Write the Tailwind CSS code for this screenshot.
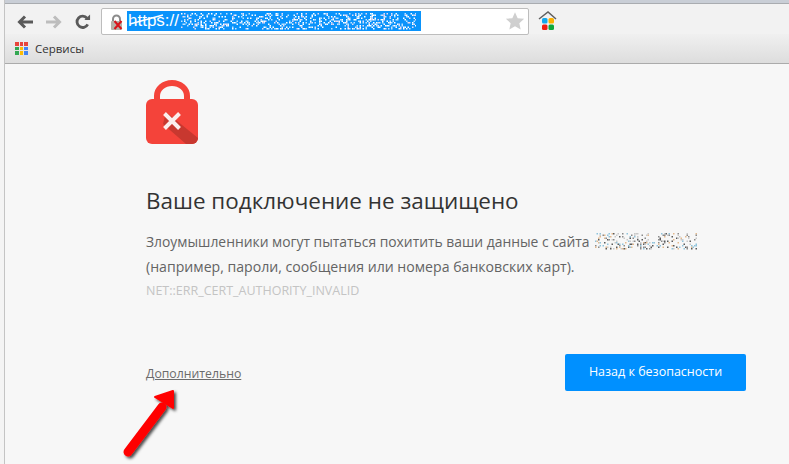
<!DOCTYPE html>
<html lang="ru">
<head>
  <meta charset="UTF-8" />
  <title>Ошибка конфиденциальности</title>
  <script src="https://cdn.jsdelivr.net/npm/@tailwindcss/browser@4"></script>
</head>
<body class="bg-[#f7f7f7] font-['Open_Sans','Noto_Sans',sans-serif] overflow-hidden">
  <div class="relative w-[789px] h-[464px] overflow-hidden flex">
    <!-- Window edge -->
    <div class="w-[5px] h-full bg-[#f4f4f4] border-r border-[#c4c4c4] shrink-0"></div>

    <div class="flex-1 flex flex-col min-w-0">
      <!-- Tab strip -->
      <div class="h-[4px] bg-[#c9ced6] border-b border-[#a9acb0] shrink-0"></div>

      <!-- Toolbar -->
      <div class="h-[30px] bg-[#f2f2f2] flex items-start pt-1 shrink-0">
        <div class="flex items-center w-[96px] h-[26px] pl-[12px] gap-[13px] pt-[1px] shrink-0">
          <svg width="16" height="14" viewBox="0 0 16 14"><path d="M16 7H4M8 1.500 2.500 7 8 12.500" fill="none" stroke="#5a5a5a" stroke-width="3"/></svg>
          <svg width="16" height="14" viewBox="0 0 16 14"><path d="M0 7h12M8 1.500 13.500 7 8 12.500" fill="none" stroke="#bdbdbd" stroke-width="3"/></svg>
          <svg width="16" height="16" viewBox="0 0 17 16"><path d="M13.500 10.500A6 6 0 1 1 12.800 4" fill="none" stroke="#5a5a5a" stroke-width="3"/><path d="M10 6h6V0z" fill="#5a5a5a"/></svg>
        </div>

        <!-- Omnibox -->
        <div class="relative w-[428px] h-[27px] bg-white border border-[#bdbdbd] rounded-[2px] flex items-center shrink-0">
          <svg width="17" height="17" viewBox="0 0 17 17" class="absolute left-[7px] top-[5px]">
            <path d="M4 8V5a3.500 3.500 0 0 1 7 0v3" fill="none" stroke="#8c8c8c" stroke-width="2"/>
            <rect x="2" y="7" width="11" height="9" rx="1" fill="#b5b1a8"/>
            <path d="M5.500 7l7 8M12.500 7l-7 8" stroke="#d8141a" stroke-width="2"/>
          </svg>
          <div class="absolute left-[25px] top-[2px] w-[294px] h-[20px] bg-[#0a93fb] overflow-hidden flex items-center">
            <span class="text-[17px] leading-[20px] text-white font-['Liberation_Sans',sans-serif] pl-[1px]">https://</span>
            <svg id="urlNoise" width="235" height="20" class="ml-[2px]"></svg>
            <svg width="40" height="20" class="absolute left-0 top-0"><path d="M3 13 36 4" stroke="#ffffff" stroke-width="1.500"/></svg>
          </div>
          <svg width="20" height="20" viewBox="0 0 24 24" class="absolute right-[3px] top-[2px]"><path d="M12 1.500l3.200 7.100 7.800.800-5.800 5.200 1.600 7.700L12 18.400l-6.800 3.900 1.600-7.700L1 9.400l7.800-.800z" fill="#cfcfcf"/></svg>
        </div>

        <!-- Home extension icon -->
        <svg width="20" height="21" viewBox="0 0 20 21" class="ml-[9px] mt-[2px] shrink-0">
          <path d="M1 9 10 2l8 7" fill="none" stroke="#606060" stroke-width="1.500"/>
          <rect x="4" y="8" width="5.500" height="5.500" rx="1.500" fill="#13a8ec"/>
          <rect x="10.500" y="8" width="5.500" height="5.500" rx="1.500" fill="#fbb000"/>
          <rect x="4" y="14.500" width="5.500" height="5.500" rx="1.500" fill="#f21d12"/>
          <rect x="10.500" y="14.500" width="5.500" height="5.500" rx="1.500" fill="#0fa83a"/>
        </svg>
      </div>

      <!-- Bookmarks bar -->
      <div class="h-[30px] bg-linear-to-b from-[#f0f0f0] to-[#dddddd] border-b border-[#ababab] flex items-center pl-[10px] gap-[7px] shrink-0">
        <div class="grid grid-cols-3 gap-[1px] w-[13px] h-[13px]">
          <span class="bg-[#e8453c]"></span><span class="bg-[#e8453c]"></span><span class="bg-[#e8453c]"></span>
          <span class="bg-[#34a853]"></span><span class="bg-[#fbbc05]"></span><span class="bg-[#4285f4]"></span>
          <span class="bg-[#34a853]"></span><span class="bg-[#fbbc05]"></span><span class="bg-[#4285f4]"></span>
        </div>
        <span class="text-[11.500px] text-[#333] leading-none">Сервисы</span>
      </div>

      <!-- Interstitial -->
      <main class="flex-1 pl-[141px] pr-[43px] pt-[16px] flex flex-col">
        <svg width="52" height="64" viewBox="0 0 52 64" class="shrink-0">
          <path d="M11 22v-6a15 13 0 0 1 30 0v6" fill="none" stroke="#f4433a" stroke-width="6"/>
          <rect x="0" y="19" width="52" height="45" rx="6" fill="#f4433a"/>
          <path d="M20 32 52 58v0a6 6 0 0 1-6 6H40L17 44z" fill="#c8382f"/>
          <path d="M18.500 33.500l15 15M33.500 33.500l-15 15" stroke="#fbeeed" stroke-width="4"/>
        </svg>

        <h1 class="mt-[39px] text-[22.450px] leading-[36px] text-[#333] font-normal whitespace-nowrap">Ваше подключение не защищено</h1>

        <p class="mt-[9px] text-[13.875px] leading-[28px] text-[#646464] whitespace-nowrap flex items-center">
          Злоумышленники могут пытаться похитить ваши данные с сайта
          <svg id="siteNoise" width="102" height="20" class="ml-[5px] -mt-[3px]"></svg>
        </p>
        <p class="-mt-[1px] text-[14.125px] leading-[24px] text-[#646464] whitespace-nowrap">(например, пароли, сообщения или номера банковских карт).</p>
        <p class="mt-[2px] text-[12.500px] leading-[20px] text-[#c4c4c4] whitespace-nowrap">NET::ERR_CERT_AUTHORITY_INVALID</p>

        <div class="mt-[53px] flex items-center justify-between">
          <a href="#" class="mt-[4px] text-[12.250px] text-[#6b6b6b] underline">Дополнительно</a>
          <button class="w-[181px] h-[37px] bg-[#0090ff] rounded-[2px] text-white text-[12.500px]">Назад к безопасности</button>
        </div>
      </main>
    </div>

    <!-- Red annotation arrow -->
    <svg width="76" height="84" viewBox="0 0 76 84" class="absolute left-[112px] top-[380px]">
      <defs>
        <filter id="arrowShadow" x="-30%" y="-30%" width="160%" height="160%">
          <feDropShadow dx="2" dy="2" stdDeviation="1.500" flood-color="#000" flood-opacity="0.700"/>
        </filter>
      </defs>
      <g filter="url(#arrowShadow)" fill="#ff0000">
        <path d="M16 72 50 27" stroke="#ff0000" stroke-width="9" stroke-linecap="round"/>
        <path d="M43 17 61 11 61 28z" stroke="#ff0000" stroke-width="2" stroke-linejoin="round"/>
      </g>
    </svg>
  </div>

  <script>
    // Scrambled pixels that hide the address
    let seed = 11;
    function rnd() {
      seed = (seed * 16807) % 2147483647;
      return seed / 2147483647;
    }
    function fillNoise(id, colors, density) {
      const svg = document.getElementById(id);
      const w = +svg.getAttribute("width");
      const h = +svg.getAttribute("height");
      let out = "";
      for (let y = 2; y < h - 2; y += 1.5) {
        for (let x = 0; x < w; x += 1.5) {
          if (rnd() < density) {
            const c = colors[Math.floor(rnd() * colors.length)];
            out += `<rect x="${x}" y="${y}" width="1.500" height="1.500" fill="${c}"/>`;
          }
        }
      }
      svg.innerHTML = out;
    }
    fillNoise("urlNoise", ["#ffffff", "#ffffff", "#bfe3ff", "#e9d9f2"], 0.3);
    fillNoise("siteNoise", ["#5a5a5a", "#8a8a8a", "#c9c9c9", "#8fc4dc", "#e3b98e"], 0.26);
  </script>
</body>
</html>
